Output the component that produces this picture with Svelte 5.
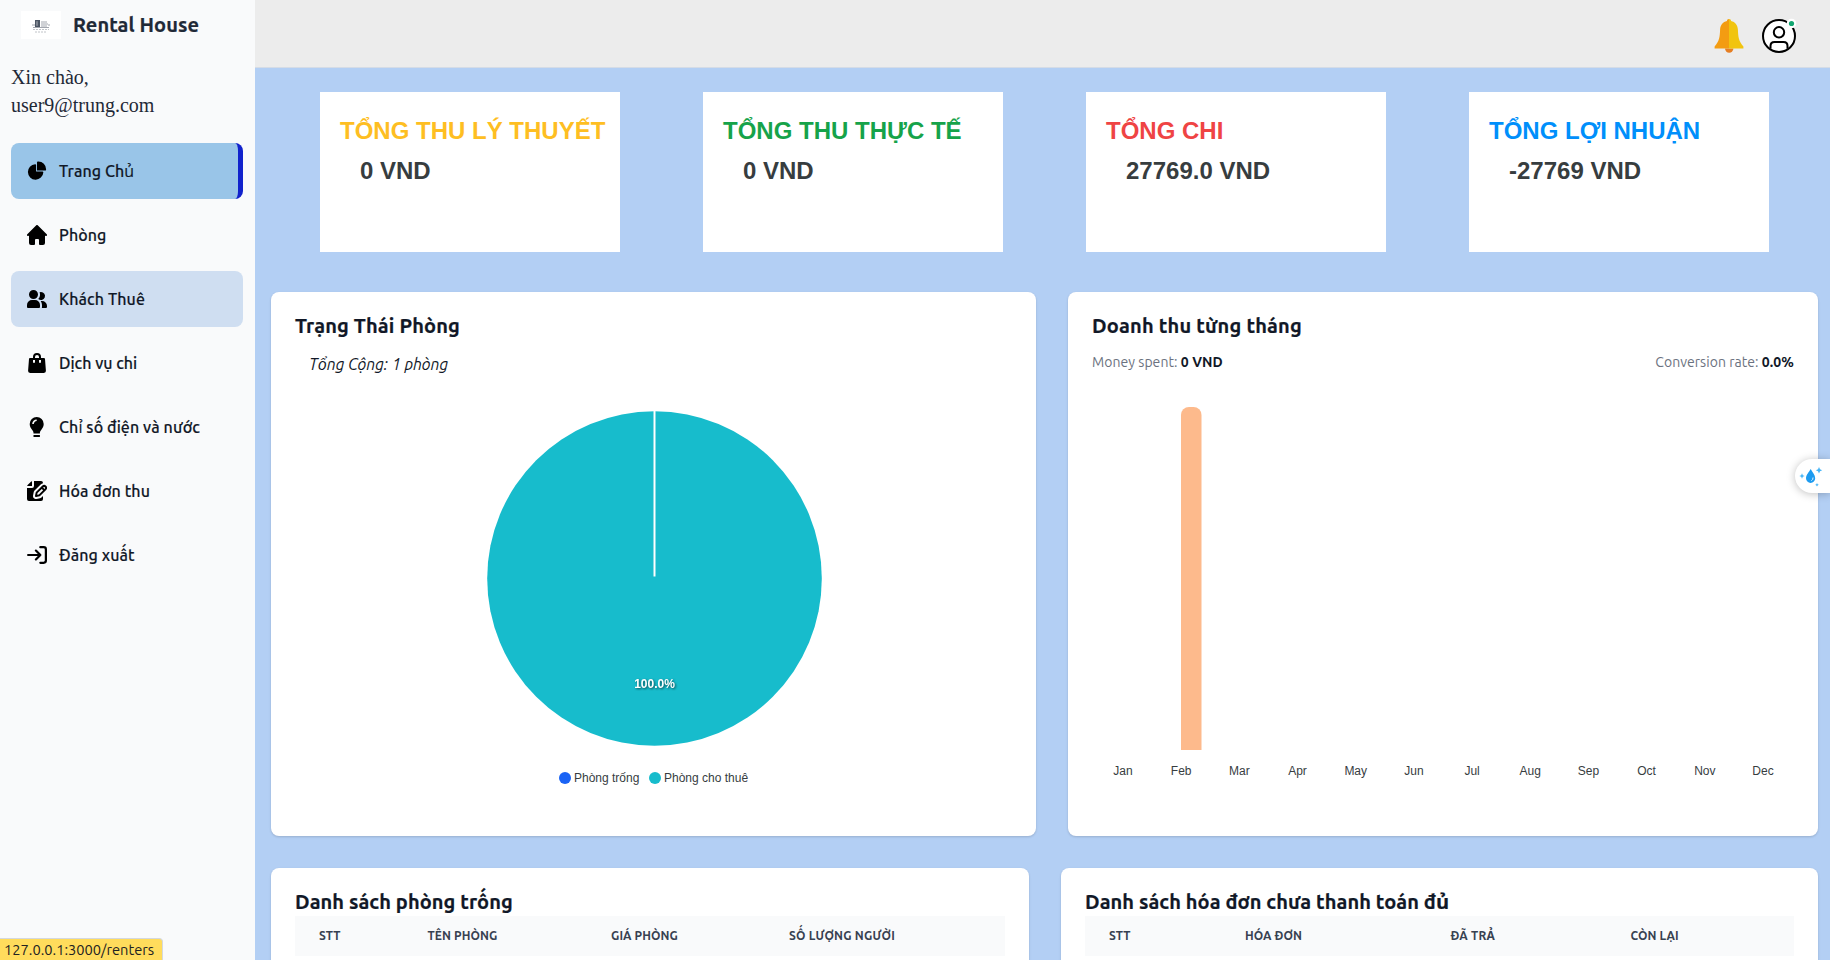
<script>
  const nav = [
    { label: 'Trang Chủ', icon: 'pie', active: true },
    { label: 'Phòng', icon: 'home' },
    { label: 'Khách Thuê', icon: 'users', hovered: true },
    { label: 'Dịch vụ chi', icon: 'bag', tight: true },
    { label: 'Chỉ số điện và nước', icon: 'bulb' },
    { label: 'Hóa đơn thu', icon: 'edit' },
    { label: 'Đăng xuất', icon: 'exit' }
  ];
  const stats = [
    { title: 'TỔNG THU LÝ THUYẾT', value: '0 VND', tone: 'amber' },
    { title: 'TỔNG THU THỰC TẾ', value: '0 VND', tone: 'green' },
    { title: 'TỔNG CHI', value: '27769.0 VND', tone: 'red' },
    { title: 'TỔNG LỢI NHUẬN', value: '-27769 VND', tone: 'blue' }
  ];
  const months = ['Jan', 'Feb', 'Mar', 'Apr', 'May', 'Jun', 'Jul', 'Aug', 'Sep', 'Oct', 'Nov', 'Dec'];
</script>

<div class="app">
  <aside class="sidebar">
    <div class="brand">
      <svg class="logo" viewBox="0 0 40 28">
        <rect width="40" height="28" fill="#fff" />
        <path d="M14 9h5v7h-5z" fill="#4b5563" />
        <path d="M15.5 10.500h1v4h-1zM20 11h6M20 13h7M20 15h6M11 14h3M27 14h2M12 16.500h16" stroke="#8b919b" stroke-width=".8" fill="none" />
        <path d="M12 18.500h16M14 21h12" stroke="#b9bcc2" stroke-width=".9" stroke-dasharray="2 1" />
      </svg>
      <span class="brand-name">Rental House</span>
    </div>
    <p class="greeting">Xin chào,<br />user9@trung.com</p>
    <nav>
      {#each nav as item}
        <div class="nav-item" class:active={item.active} class:hovered={item.hovered}>
          <span class="icon">
            {#if item.icon === 'pie'}
              <svg width="20" height="20" viewBox="0 0 22 21"><path d="M16.975 11H10V4.025a1 1 0 0 0-1.066-.998 8.500 8.500 0 1 0 9.039 9.039.999.999 0 0 0-1-1.066h.002Z" /><path d="M12.500 0c-.157 0-.311.01-.565.027A1 1 0 0 0 11 1.020V10h8.975a1 1 0 0 0 1-.935c.013-.188.028-.374.028-.565A8.510 8.510 0 0 0 12.500 0Z" /></svg>
            {:else if item.icon === 'home'}
              <svg width="20" height="20" viewBox="0 0 20 20"><path d="m19.707 9.293-2-2-7-7a1 1 0 0 0-1.414 0l-7 7-2 2a1 1 0 0 0 1.414 1.414L2 10.414V18a2 2 0 0 0 2 2h3a1 1 0 0 0 1-1v-4a1 1 0 0 1 1-1h2a1 1 0 0 1 1 1v4a1 1 0 0 0 1 1h3a2 2 0 0 0 2-2v-7.586l.293.293a1 1 0 0 0 1.414-1.414Z" /></svg>
            {:else if item.icon === 'users'}
              <svg width="20" height="20" viewBox="0 0 20 18"><path d="M14 2a3.963 3.963 0 0 0-1.400.267 6.439 6.439 0 0 1-1.331 6.638A4 4 0 1 0 14 2Zm1 9h-1.264A6.957 6.957 0 0 1 15 15v2a2.970 2.970 0 0 1-.184 1H19a1 1 0 0 0 1-1v-1a5.006 5.006 0 0 0-5-5ZM6.500 9a4.500 4.500 0 1 0 0-9 4.500 4.500 0 0 0 0 9ZM8 10H5a5.006 5.006 0 0 0-5 5v2a1 1 0 0 0 1 1h11a1 1 0 0 0 1-1v-2a5.006 5.006 0 0 0-5-5Z" /></svg>
            {:else if item.icon === 'bag'}
              <svg width="20" height="20" viewBox="0 0 18 20"><path d="M17 5.923A1 1 0 0 0 16 5h-3V4a4 4 0 1 0-8 0v1H2a1 1 0 0 0-1 .923L.086 17.846A2 2 0 0 0 2.080 20h13.840a2 2 0 0 0 1.994-2.153L17 5.923ZM7 9a1 1 0 0 1-2 0V7h2v2Zm0-5a2 2 0 1 1 4 0v1H7V4Zm6 5a1 1 0 1 1-2 0V7h2v2Z" /></svg>
            {:else if item.icon === 'bulb'}
              <svg width="20" height="20" viewBox="0 0 20 20"><path d="M9.700 0a7 7 0 0 0-7 7c0 2.500 1.100 4.200 2.500 5.900.9 1.100 1.300 2 1.300 3.100v.6h6.400V16c0-1.100.4-2 1.300-3.100 1.400-1.700 2.500-3.400 2.500-5.900a7 7 0 0 0-7-7ZM6.500 18h6.400v2H6.500z" /><path d="M6 7a3.700 3.700 0 0 1 3.700-3.700" fill="none" stroke="#f9fafb" stroke-width="1.600" /></svg>
            {:else if item.icon === 'edit'}
              <svg width="20" height="20" viewBox="0 0 20 20"><path d="M5 5V.13a2.960 2.960 0 0 0-1.293.749L.879 3.707A2.960 2.960 0 0 0 .13 5H5Z" /><path d="M6.737 11.061a2.961 2.961 0 0 1 .81-1.515l6.117-6.116A4.839 4.839 0 0 1 16 2.141V2a1.970 1.970 0 0 0-1.933-2H7v5a2 2 0 0 1-2 2H0v11a1.969 1.969 0 0 0 1.933 2h12.134A1.970 1.970 0 0 0 16 18v-3.093l-1.546 1.546c-.413.413-.94.695-1.513.81l-3.400.679a2.947 2.947 0 0 1-1.850-.227 2.960 2.960 0 0 1-1.635-3.257l.681-3.397Z" /><path d="M8.961 16a.93.93 0 0 0 .189-.019l3.400-.679a.961.961 0 0 0 .49-.263l6.118-6.117a2.884 2.884 0 0 0-4.079-4.078l-6.117 6.117a.96.96 0 0 0-.263.491l-.679 3.400A.961.961 0 0 0 8.961 16Zm7.477-9.800a.958.958 0 0 1 .68-.281.961.961 0 0 1 .682 1.644l-.315.315-1.360-1.360.313-.318Zm-5.911 5.911 4.236-4.236 1.359 1.359-4.236 4.237-1.700.339.341-1.699Z" /></svg>
            {:else}
              <svg width="20" height="20" viewBox="0 0 18 16"><path d="M1 8h11m0 0L8 4m4 4-4 4m4-11h3a2 2 0 0 1 2 2v10a2 2 0 0 1-2 2h-3" fill="none" stroke="#000" stroke-width="2" stroke-linecap="round" stroke-linejoin="round" /></svg>
            {/if}
          </span>
          <span class="label" class:tight={item.tight}>{item.label}</span>
        </div>
      {/each}
    </nav>
  </aside>

  <div class="content">
    <header>
      <svg width="30" height="36" viewBox="0 0 30 36">
        <path d="M11 30.500a4.200 4.200 0 0 0 8.400 0Z" fill="#e67e22" />
        <path d="M15 1c-1.300 0-2 .7-2 1.900C8.700 3.800 6.300 7 6.100 11.500 5.800 19 5.400 23 .6 28.500V30.500H15Z" fill="#f39c12" />
        <path d="M15 1c1.300 0 2 .7 2 1.900 4.300.9 6.700 4.100 6.900 8.600.3 7.500.7 11.500 5.500 17V30.500H15Z" fill="#f1c40f" />
      </svg>
      <svg width="36" height="36" viewBox="0 0 36 36">
        <circle cx="17" cy="18" r="16" fill="#fff" stroke="#000" stroke-width="2" />
        <circle cx="17" cy="14.300" r="5.200" fill="none" stroke="#000" stroke-width="2" />
        <path d="M8.500 30.800V28c0-2.400 1.600-4 4-4h9c2.400 0 4 1.600 4 4v2.800" fill="none" stroke="#000" stroke-width="2" />
        <circle cx="29.500" cy="5.500" r="4.800" fill="#fff" />
        <circle cx="29.500" cy="5.500" r="2.600" fill="#12a670" />
      </svg>
    </header>

    <section class="stats">
      {#each stats as s}
        <div class="stat">
          <div class="stat-title {s.tone}">{s.title}</div>
          <div class="stat-value">{s.value}</div>
        </div>
      {/each}
    </section>

    <section class="row charts">
      <div class="panel rooms">
        <h3 class="wide">Trạng Thái Phòng</h3>
        <p class="sub">Tổng Cộng: 1 phòng</p>
        <svg width="717" height="436" viewBox="295 376 717 436">
          <circle cx="654.500" cy="578.500" r="167.300" fill="#17bccc" />
          <path d="M654.500 411V576.500" stroke="#fff" stroke-width="2" />
          <text class="pct" x="654.500" y="688" text-anchor="middle">100.0%</text>
          <circle cx="565" cy="778" r="6" fill="#1a63f5" />
          <text class="axis" x="574" y="782">Phòng trống</text>
          <circle cx="655" cy="778" r="6" fill="#17bccc" />
          <text class="axis" x="664" y="782">Phòng cho thuê</text>
        </svg>
      </div>
      <div class="panel revenue">
        <h3 class="wider">Doanh thu từng tháng</h3>
        <div class="facts">
          <span>Money spent: <b>0 VND</b></span>
          <span>Conversion rate: <b>0.0%</b></span>
        </div>
        <svg width="702" height="440" viewBox="1092 372 702 440">
          <path d="M1181 750V415a8 8 0 0 1 8-8h4.500a8 8 0 0 1 8 8V750Z" fill="#fdba8c" />
          {#each months as m, i}
            <text class="axis" x={1123 + i * 58.18} y="775" text-anchor="middle">{m}</text>
          {/each}
        </svg>
      </div>
    </section>

    <section class="row tables">
      <div class="panel vacant">
        <h3>Danh sách phòng trống</h3>
        <div class="thead">
          <span>STT</span><span>TÊN PHÒNG</span><span>GIÁ PHÒNG</span><span class="loose">SỐ LƯỢNG NGƯỜI</span>
        </div>
      </div>
      <div class="panel unpaid">
        <h3>Danh sách hóa đơn chưa thanh toán đủ</h3>
        <div class="thead">
          <span>STT</span><span>HÓA ĐƠN</span><span class="loose">ĐÃ TRẢ</span><span>CÒN LẠI</span>
        </div>
      </div>
    </section>
  </div>

  <div class="status">127.0.0.1:3000/renters</div>
  <div class="widget">
    <svg width="30" height="34" viewBox="0 0 30 34">
      <path d="M15.700 10c-1.600 3-4.700 5.800-4.700 9.300a4.600 4.600 0 0 0 9.200 0c0-3.500-3-6.300-4.500-9.300Z" fill="#1d9bf0" />
      <path d="M18 18.500q.2 2.200-1.600 3.200" stroke="#fff" fill="none" stroke-width=".9" />
      <path d="M24 8l1 2.200 2.200 1-2.200 1-1 2.200-1-2.200-2.200-1 2.200-1ZM7 14.300l.8 1.900 1.900.8-1.900.8-.8 1.900-.8-1.900-1.900-.8 1.900-.8ZM22 24l.6 1.200 1.200.6-1.200.6-.6 1.200-.6-1.200-1.200-.6 1.200-.6Z" fill="#45b5f7" />
    </svg>
  </div>
</div>

<style>
  :global(body) { margin: 0; overflow: hidden; }
  .app { display: flex; position: relative; width: 1830px; height: 960px; overflow: hidden; background: #b3cff4; font-family: Ubuntu, "Open Sans", "Noto Sans", sans-serif; color: #111827; }
  * { box-sizing: border-box; }
  svg { display: block; flex: none; }
  .sidebar { width: 255px; flex: none; background: #f9fafb; padding: 10px 12px 0 11px; }
  .brand { display: flex; align-items: center; height: 29px; padding-left: 10px; gap: 12px; }
  .logo { width: 40px; height: 28px; }
  .brand-name { font-size: 20px; line-height: 28px; font-weight: 700; letter-spacing: .08px; color: #1f2937; white-space: nowrap; -webkit-text-stroke: .2px #1f2937; }
  .greeting { margin: 24px 0; font: 20px/28px "Liberation Serif", serif; color: #1f2937; }
  nav { display: flex; flex-direction: column; gap: 8px; }
  .nav-item { display: flex; align-items: center; height: 56px; padding-left: 16px; gap: 12px; border-radius: 8px; white-space: nowrap; }
  .nav-item.active { background: #99c5e8; border-right: 5px solid #1122cc; }
  .nav-item.hovered { background: #cfdef1; }
  .label { font-size: 16px; line-height: 24px; font-weight: 500; letter-spacing: .095px; -webkit-text-stroke: .15px #111827; }
  .label.tight { letter-spacing: 0; }
  .content { flex: 1; min-width: 0; display: flex; flex-direction: column; }
  header { height: 68px; flex: none; background: #ececec; border-bottom: 1px solid #d5dce6; display: flex; justify-content: flex-end; align-items: flex-start; gap: 18px; padding: 18px 32px 0 0; }
  .stats { display: flex; gap: 83px; padding: 24px 0 0 65px; }
  .stat { width: 300px; height: 160px; background: #fff; padding: 19px 0 0 20px; font: bold 24px/40px "Liberation Sans", sans-serif; white-space: nowrap; }
  .stat-value { padding-left: 20px; color: #373d3f; }
  .amber { color: #febe22; }
  .green { color: #16a34a; }
  .red { color: #ef4444; }
  .blue { color: #008ffb; }
  .row { display: flex; gap: 32px; padding: 0 12px 0 16px; }
  .charts { margin-top: 40px; }
  .tables { margin-top: 32px; }
  .panel { background: #fff; border-radius: 8px; padding: 20px 24px 24px; box-shadow: 0 1px 3px rgba(0,0,0,.1), 0 1px 2px rgba(0,0,0,.06); height: 544px; flex: none; white-space: nowrap; }
  .rooms { width: 765px; }
  .revenue { width: 750px; }
  .vacant { width: 758px; }
  .unpaid { width: 757px; }
  h3 { margin: 0; font-size: 20px; line-height: 28px; font-weight: 700; letter-spacing: .07px; -webkit-text-stroke: .2px #111827; }
  h3.wide { letter-spacing: .145px; }
  h3.wider { letter-spacing: .188px; }
  .sub { margin: 12px 0 0 14px; font-size: 16px; line-height: 24px; font-style: italic; }
  .facts { margin-top: 12px; display: flex; justify-content: space-between; font-size: 14px; line-height: 20px; letter-spacing: .04px; color: #6b7280; }
  .facts b { color: #111827; font-weight: 700; letter-spacing: .1px; }
  .axis { font: 12px "Liberation Sans", sans-serif; fill: #373d3f; }
  .pct { font: bold 12px "Liberation Sans", sans-serif; fill: #fff; filter: drop-shadow(1px 1px 1px rgba(0,0,0,.6)); }
  .thead { height: 40px; background: #f9fafb; display: grid; align-items: center; padding-left: 24px; font-size: 12px; line-height: 16px; font-weight: 700; letter-spacing: .09px; color: #374151; }
  .thead .loose { letter-spacing: .21px; }
  .vacant .thead { grid-template-columns: 108.500px 183.500px 178px 1fr; }
  .unpaid .thead { grid-template-columns: 136px 205.500px 180px 1fr; }
  .status { position: absolute; left: 0; bottom: 0; height: 22px; width: 163px; padding-left: 4px; background: #ffdc5c; border: solid #d4d8de; border-width: 1px 1px 0 0; border-radius: 0 4px 0 0; font-size: 14.67px; line-height: 21px; white-space: nowrap; color: #222; }
  .widget { position: absolute; right: 0; top: 459px; width: 35px; height: 34px; background: #fff; border-radius: 17px 0 0 17px; box-shadow: 0 1px 8px rgba(0,0,0,.25); }
</style>
